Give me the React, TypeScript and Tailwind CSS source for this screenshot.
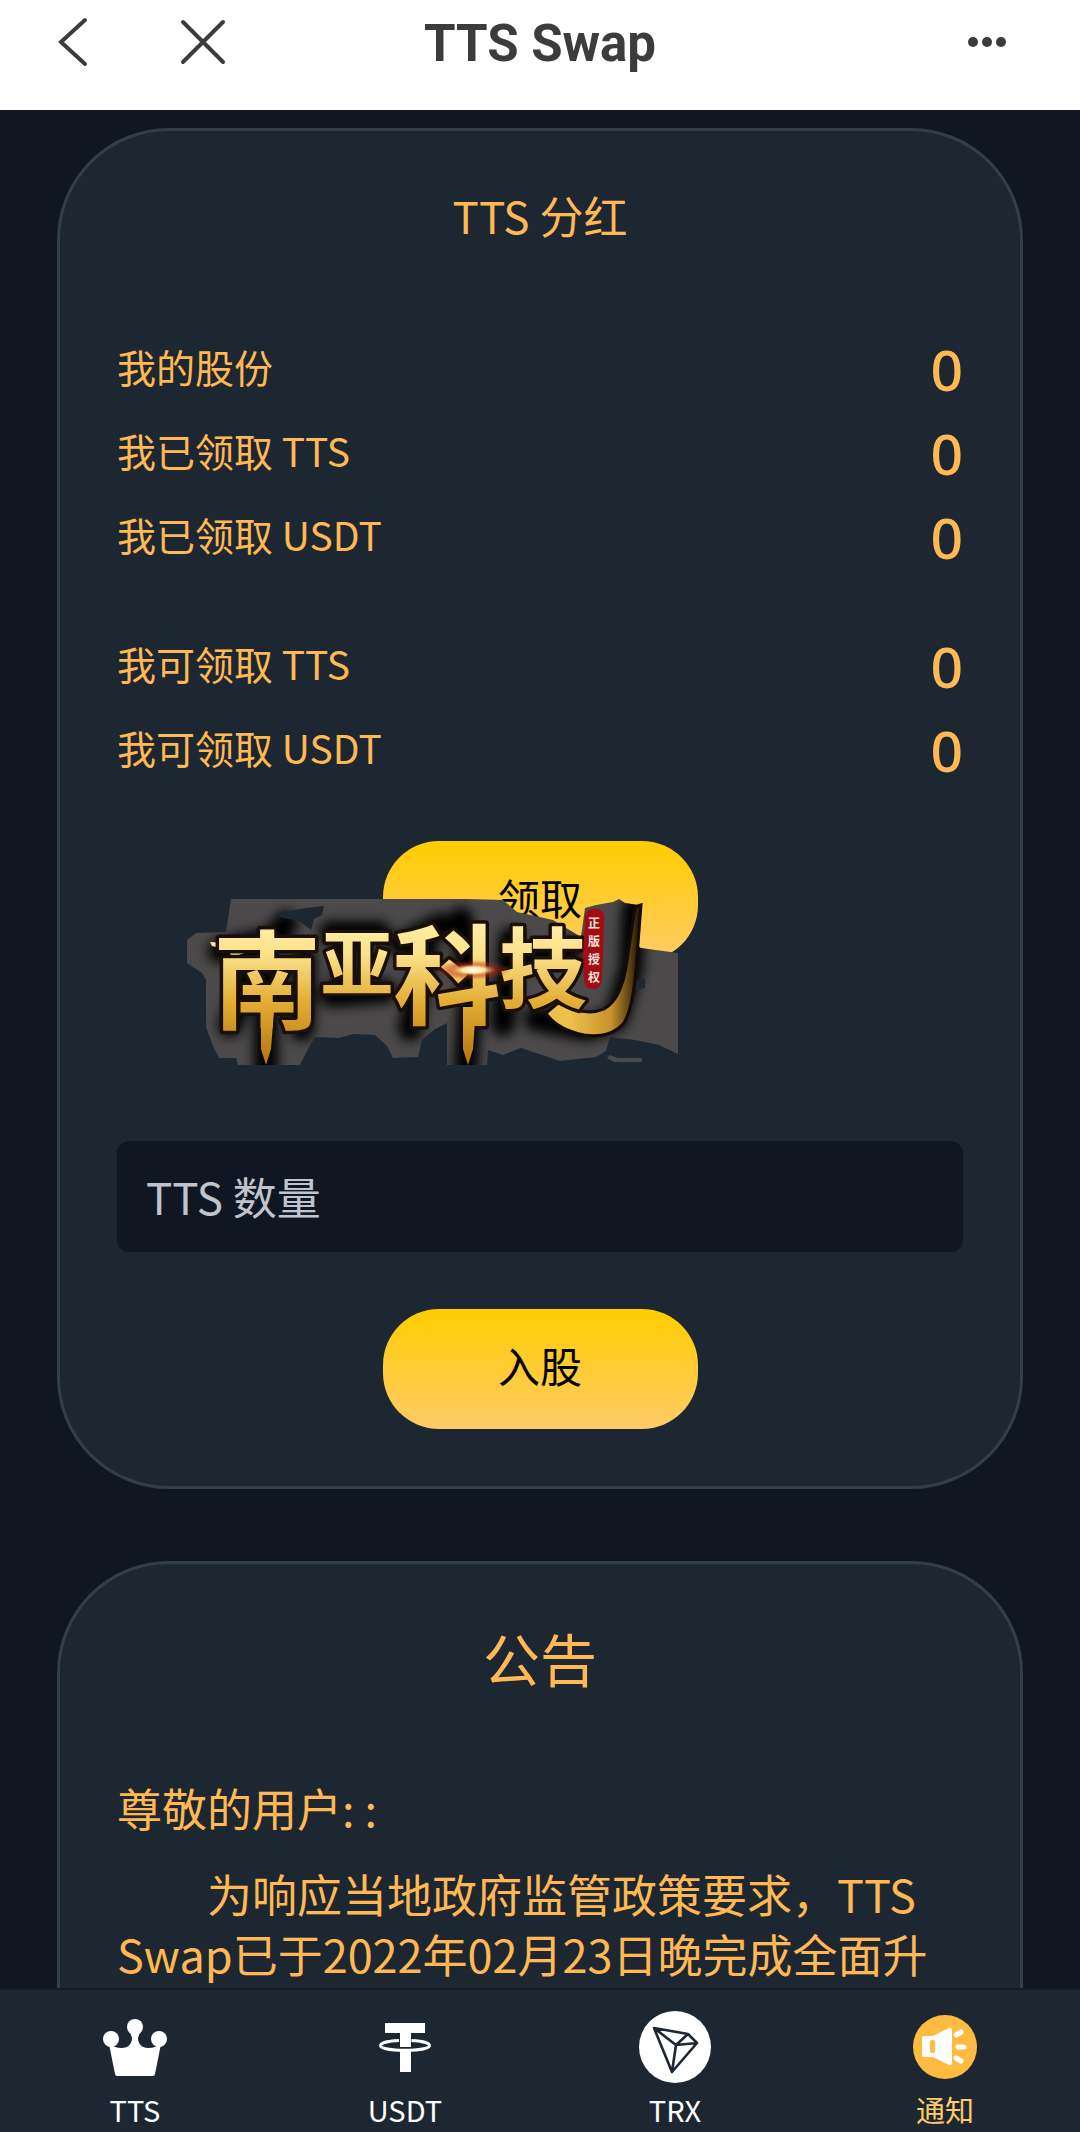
import { useState } from 'react'
import type { ReactNode } from 'react'

type Row = { label: string; value: number }

const received: Row[] = [
  { label: '我的股份', value: 0 },
  { label: '我已领取 TTS', value: 0 },
  { label: '我已领取 USDT', value: 0 },
]

const claimable: Row[] = [
  { label: '我可领取 TTS', value: 0 },
  { label: '我可领取 USDT', value: 0 },
]

function CrownIcon() {
  return (
    <svg width="64" height="57" viewBox="0 0 64 57" fill="#fff" aria-hidden="true">
      <circle cx="8" cy="20" r="8" />
      <circle cx="32" cy="8" r="8" />
      <circle cx="56" cy="20" r="8" />
      <path d="M6 25C9 27 13 29 19 29C25 29 29 25 29 19L27 13H37L35 19C35 25 39 29 45 29C51 29 55 27 58 25L52 55Q51.500 57 50 57H14Q12.500 57 12 55Z" />
    </svg>
  )
}

function TetherIcon() {
  return (
    <svg width="52" height="49" viewBox="0 0 52 49" aria-hidden="true">
      <path d="M6 0h40v10H32v14H21V10H6zM21 28h11v21H21z" fill="#fff" />
      <path
        d="M20 17.500C9 18 1.500 20 1.500 22.500c0 3 11 4.800 24.500 4.800s24.500-1.800 24.500-4.800c0-2.500-7.500-4.500-18-5"
        fill="none"
        stroke="#fff"
        strokeWidth="3"
      />
    </svg>
  )
}

function TronIcon() {
  return (
    <svg width="72" height="72" viewBox="0 0 72 72" aria-hidden="true">
      <circle cx="36" cy="36" r="36" fill="#fff" />
      <path
        d="M15 17l34 6 9 9-25 29zM15 17l22 17 21-2M49 23L37 34l-4 27"
        fill="none"
        stroke="#1d2732"
        strokeWidth="2.600"
        strokeLinejoin="round"
      />
    </svg>
  )
}

function HornIcon() {
  return (
    <svg width="64" height="64" viewBox="0 0 64 64" aria-hidden="true">
      <circle cx="32" cy="32" r="32" fill="#ffbb40" />
      <path d="M11 21h9l16-8q3-1 3 2v33q0 3-3 2l-16-8h-9q-2 0-2-2V23q0-2 2-2z" fill="#fff" />
      <rect x="17" y="25" width="5" height="13" rx="2" fill="#ffbb40" />
      <path d="M43 20l5-3M45 32h6M43 43l5 3" stroke="#fff" strokeWidth="5" strokeLinecap="round" />
    </svg>
  )
}

// Brush lettering on a torn grey backing
function StudioMark() {
  return (
    <svg
      className="pointer-events-none absolute -top-[62px] left-[69px] overflow-visible font-['Noto_Sans_CJK_SC',sans-serif] font-bold"
      width="492"
      height="166"
      viewBox="0 0 492 166"
      role="img"
      aria-label="南亚科技"
    >
      <defs>
        <linearGradient id="gold" x1="0" y1="10" x2="0" y2="160" gradientUnits="userSpaceOnUse">
          <stop offset="0" stopColor="#fff3b4" />
          <stop offset="0.300" stopColor="#fbe28a" />
          <stop offset="0.620" stopColor="#e3ad35" />
          <stop offset="1" stopColor="#b8780f" />
        </linearGradient>
        <linearGradient id="tail" x1="385" y1="0" x2="452" y2="0" gradientUnits="userSpaceOnUse">
          <stop offset="0" stopColor="#edbf4b" />
          <stop offset="0.600" stopColor="#c8922a" />
          <stop offset="1" stopColor="#2a1c08" />
        </linearGradient>
        <filter id="soft" x="-10%" y="-10%" width="120%" height="120%">
          <feGaussianBlur stdDeviation="6" />
        </filter>
        <radialGradient id="flare">
          <stop offset="0" stopColor="#fff" />
          <stop offset="0.300" stopColor="#ffe9a0" />
          <stop offset="0.600" stopColor="#c32a12" stopOpacity="0.500" />
          <stop offset="1" stopColor="#c32a12" stopOpacity="0" />
        </radialGradient>
        <clipPath id="torn">
          <path d="M45 0H281L317 1l14 12 36 8 28 17 4-29 11-3 17-3 6-3 6 4 13 2-5 38 8 5 37 5v101l-19-9-24-5-25-3-4 14-10 6-36 4-15-5-24-8-18 7-15-5-1 15h-40V124l-12 6-13 11-4 17-25 1-6-12-12-11-22-1-14 4-24-1-6 10-9 18H52l-2-7H33l-6-12-7-19V81l-4-7-15-10V41l9-7 30-1z" />
        </clipPath>
      </defs>
      <g clipPath="url(#torn)">
        <path d="M0 0h492v166H0z" fill="#4b4949" />
        <g
          filter="url(#soft)"
          fill="none"
          stroke="#000"
          strokeWidth="24"
          strokeLinecap="round"
          strokeLinejoin="round"
        >
          <path d="M34 52l60-14M100 24L70 60l-26 66M118 60l-2 70M80 80v90M145 34h48M145 96l54-4M160 40v50M215 46l40-20M240 50l-16 80M275 20l10 70-5 76M325 40l-8 85M345 60l40-10M350 120l50 10 30-10 15-50 3-60" />
        </g>
      </g>
      <path d="M120 9l18-2-2 9-8 4-3 11-12-9-20-4v-4zM445 82l14-2v9l-14 2z" fill="#1d2732" />
      <path d="M421 159l3-3 8 3h24v4h-28z" fill="#4b4949" />
      <path
        d="M372 104q28 14 46 6 18-10 23-48l8-54 6-2-5 64q-3 38-12 54-14 16-40 12-28-6-38-22z"
        fill="url(#tail)"
        stroke="#120c05"
        strokeWidth="3"
      />
      <path d="M24 43l18 1 24-6 6 12-26 8-4-7-16-4z" fill="url(#gold)" />
      <g
        fill="url(#gold)"
        stroke="#1a0f05"
        strokeWidth="7"
        strokeLinejoin="round"
        paintOrder="stroke"
        textAnchor="middle"
      >
        <text x="81" y="122" fontSize="108">南</text>
        <text x="171" y="91" fontSize="72">亚</text>
        <text x="261" y="117" fontSize="108">科</text>
        <text x="357" y="102" fontSize="88">技</text>
        <path d="M75 112h13l-3 38-5 16-5-16zM277 108h13l-3 42-5 16-5-16z" stroke="none" />
      </g>
      <ellipse cx="287" cy="71" rx="38" ry="10" fill="url(#flare)" />
      <path d="M402 12q7-5 14 0 3 3 2 10l-2 58q-1 10-9 10-9 0-9-10l-1-25 2-35q0-5 3-8z" fill="#a30c12" />
      <g fill="#f3e2dc" fontSize="12" textAnchor="middle">
        <text x="408" y="29">正</text>
        <text x="408" y="47">版</text>
        <text x="408" y="65">授</text>
        <text x="408" y="83">权</text>
      </g>
    </svg>
  )
}

function Card({ children }: { children: ReactNode }) {
  return (
    <section className="shrink-0 rounded-[112px] border-[3px] border-[#343e4b] bg-[#1d2732] px-[57px] pt-[54px] pb-[57px]">
      {children}
    </section>
  )
}

function RowList({ rows }: { rows: Row[] }) {
  return (
    <dl>
      {rows.map((row) => (
        <div key={row.label} className="flex h-[84px] items-center justify-between">
          <dt className="pb-[6px] text-[39px]">{row.label}</dt>
          <dd className="font-['Noto_Sans',sans-serif] text-[57px] leading-[82px] font-medium">{row.value}</dd>
        </div>
      ))}
    </dl>
  )
}

function GoldButton({ children }: { children: ReactNode }) {
  return (
    <button
      type="button"
      className="mx-auto block h-[120px] w-[315px] rounded-[56px] bg-[linear-gradient(#ffcd00,#ffcb68)] pb-[10px] text-[42px] text-black"
    >
      {children}
    </button>
  )
}

const tabs = [
  { id: 'tts', label: 'TTS', icon: <CrownIcon /> },
  { id: 'usdt', label: 'USDT', icon: <TetherIcon /> },
  { id: 'trx', label: 'TRX', icon: <TronIcon /> },
  { id: 'notice', label: '通知', icon: <HornIcon /> },
]

export default function App() {
  const [amount, setAmount] = useState('')
  const active = 'notice'

  return (
    <div className="flex h-screen flex-col bg-[#111722] font-['Noto_Sans_CJK_SC',sans-serif] text-[#ffb852]">
      <header className="grid shrink-0 grid-cols-[1fr_auto_1fr] items-center bg-white px-[57px] pb-[26px] text-[#3c3c3e]">
        <div className="flex items-center gap-[91px]">
          <button type="button" aria-label="返回">
            <svg width="32" height="50" viewBox="0 0 32 50" fill="none" stroke="currentColor" strokeWidth="4" strokeLinecap="round">
              <path d="M28 3L4 25l24 22" />
            </svg>
          </button>
          <button type="button" aria-label="关闭">
            <svg width="46" height="46" viewBox="0 0 46 46" fill="none" stroke="currentColor" strokeWidth="4" strokeLinecap="round">
              <path d="M3 3l40 40M43 3L3 43" />
            </svg>
          </button>
        </div>
        <h1 className="pt-1 font-['Roboto',sans-serif] text-[51px] leading-[80px] font-bold">TTS Swap</h1>
        <button type="button" aria-label="更多" className="justify-self-end pr-4">
          <svg width="40" height="12" viewBox="0 0 40 12" fill="currentColor">
            <circle cx="6" cy="6" r="5" />
            <circle cx="20" cy="6" r="5" />
            <circle cx="34" cy="6" r="5" />
          </svg>
        </button>
      </header>

      <main className="flex min-h-0 flex-1 flex-col gap-[72px] overflow-y-auto px-[57px] pt-[18px] [scrollbar-width:none]">
        <Card>
          <h2 className="mb-[82px] text-center text-[44px] leading-[60px]">TTS 分红</h2>
          <div className="flex flex-col gap-[45px]">
            <RowList rows={received} />
            <RowList rows={claimable} />
          </div>

          <div className="mt-[49px]">
            <GoldButton>领取</GoldButton>
          </div>
          <div className="relative h-[180px]">
            <StudioMark />
          </div>

          <input
            aria-label="TTS 数量"
            placeholder="TTS 数量"
            value={amount}
            onChange={(e) => setAmount(e.target.value)}
            className="mb-[57px] block h-[111px] w-full rounded-xl bg-[#111722] px-[29px] pb-[2px] text-[44px] text-[#c0c4cc] outline-none placeholder:text-[#c0c4cc]"
          />
          <GoldButton>入股</GoldButton>
        </Card>

        <Card>
          <h2 className="mb-[82px] text-center text-[57px] leading-[78px]">公告</h2>
          <div className="pb-[120px] text-[45px] leading-[60px]">
            <p>尊敬的用户: :</p>
            <p className="mt-[26px] indent-[90px]">
              为响应当地政府监管政策要求，TTS Swap已于2022年02月23日晚完成全面升
            </p>
          </div>
        </Card>
      </main>

      <nav className="grid shrink-0 grid-cols-4 border-t-2 border-[#141b26] bg-[#1d2732] pt-[21px] pb-[5px]">
        {tabs.map((tab) => (
          <a
            key={tab.id}
            href={`#${tab.id}`}
            aria-current={tab.id === active ? 'page' : undefined}
            className={`flex flex-col items-center gap-[8px] text-[29px] leading-[36px] ${
              tab.id === active ? 'text-[#ffcb68]' : 'text-white'
            }`}
          >
            <span className="flex h-[72px] items-center">{tab.icon}</span>
            {tab.label}
          </a>
        ))}
      </nav>
    </div>
  )
}
